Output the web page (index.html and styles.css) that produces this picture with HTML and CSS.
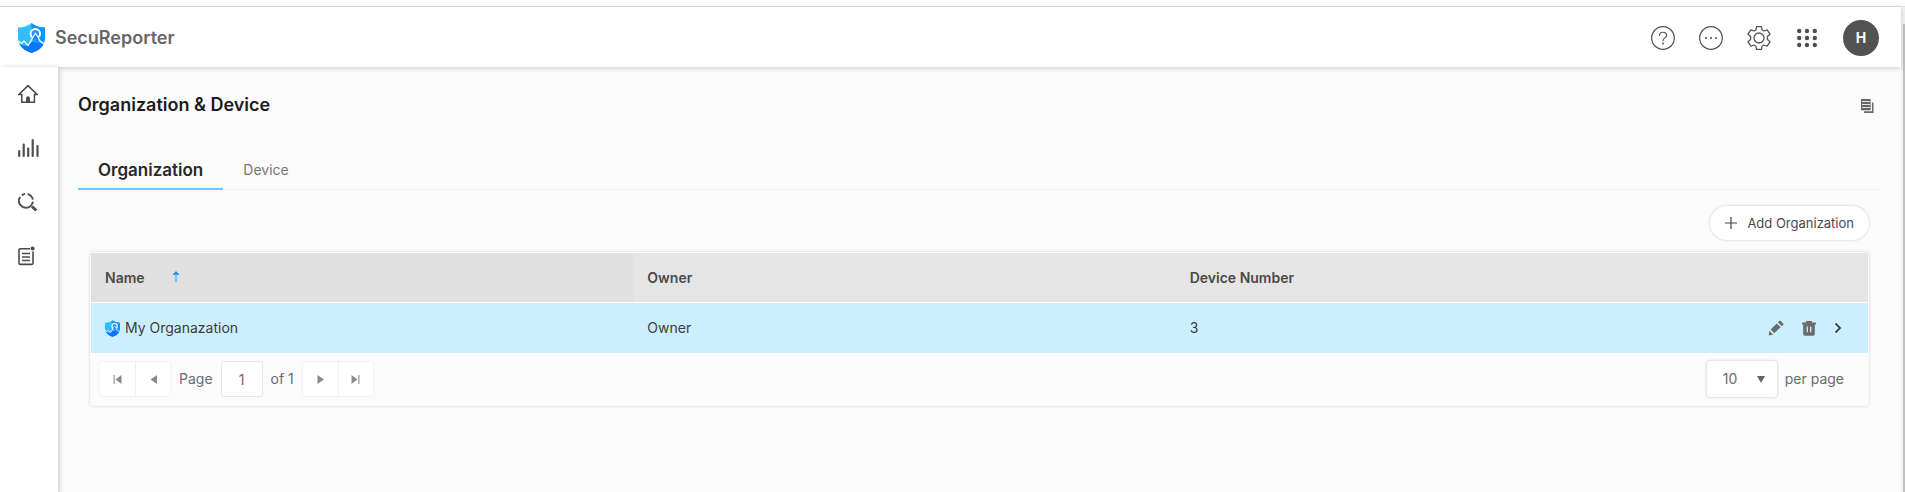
FILE: index.html
```html
<!DOCTYPE html>
<html lang="en">
<head>
<meta charset="utf-8">
<meta name="viewport" content="width=device-width, initial-scale=1">
<title>SecuReporter</title>
<link rel="stylesheet" href="styles.css">
</head>
<body>
<svg class="sprite" aria-hidden="true">
  <linearGradient id="shield-left" x1="0" y1="0" x2="0" y2="1"><stop offset="0" stop-color="#2fc3ff"/><stop offset="1" stop-color="#38b2ff"/></linearGradient>
  <symbol id="shield" viewBox="0 0 27 30">
    <path d="M0 4.500C5 4.600 9.500 3.200 13.500 0C17.500 3.200 22 4.600 27 4.500V16C27 23 20 28 13.500 30C7 28 0 23 0 16Z" fill="url(#shield-left)"/>
    <path d="M13.500 0C17.500 3.200 22 4.600 27 4.500V16L24 22L13.500 16Z" fill="#0a96ff"/>
    <path d="M1.500 21.500L8 23L15 18.500L25.800 21C23.500 25.500 18.500 28.500 13.500 30C8.500 28.500 4 25.500 1.500 21.500Z" fill="#0877ff"/>
    <circle cx="17.300" cy="10.800" r="4.700" fill="#2196ff" stroke="#fff" stroke-width="2"/>
    <path d="M0 18L3.500 20.500L6 18L10 22.500L17.500 10.500L22 18L26.500 21.500" fill="none" stroke="#fff" stroke-width="1.300"/>
    <path d="M14.500 16.500L17.500 11.500L20.500 16.500Z" fill="#0b7dff"/>
  </symbol>
</svg>
<div class="page">
  <div class="app">
    <header class="topbar">
      <a class="brand" href="#"><svg class="brand-logo" aria-hidden="true"><use href="#shield"/></svg>SecuReporter</a>
      <div class="top-actions">
        <button class="icon-btn" aria-label="Help"><svg width="24" height="24" viewBox="0 0 24 24" fill="none" stroke="#555" stroke-width="1.200"><circle cx="12" cy="12" r="11.300"/><path d="M8.500 9.500C8.500 5.200 15.600 5.200 15.600 9.400C15.600 12 12 11.800 12 14.800" stroke-linecap="round"/><circle cx="12" cy="17.600" r="1" fill="#555" stroke="none"/></svg></button>
        <button class="icon-btn" aria-label="More"><svg width="24" height="24" viewBox="0 0 24 24" fill="none" stroke="#555" stroke-width="1.200"><circle cx="12" cy="12" r="11.300"/><g fill="#555" stroke="none"><circle cx="7" cy="12" r="1.100"/><circle cx="12" cy="12" r="1.100"/><circle cx="17" cy="12" r="1.100"/></g></svg></button>
        <button class="icon-btn" aria-label="Settings"><svg width="24" height="24" viewBox="0 0 24 24" fill="none" stroke="#555" stroke-width="1.300" stroke-linejoin="round"><circle cx="12" cy="12" r="5"/><path d="M9.500 .7h5l.6 3.300 1.800 1 3.200-1.200 2.900 4.400-2.600 2.300v3l2.600 2.300-2.900 4.400-3.200-1.200-1.800 1-.6 3.300h-5l-.6-3.300-1.800-1-3.200 1.200L1 15.800l2.600-2.300v-3L1 8.200l2.900-4.400L7.100 5l1.800-1z"/></svg></button>
        <button class="icon-btn apps" aria-label="Apps"><svg width="20" height="20" viewBox="0 0 20 20" fill="#4f4f4f"><circle cx="2.200" cy="3" r="2.200"/><circle cx="10" cy="3" r="2.200"/><circle cx="17.800" cy="3" r="2.200"/><circle cx="2.200" cy="10" r="2.200"/><circle cx="10" cy="10" r="2.200"/><circle cx="17.800" cy="10" r="2.200"/><circle cx="2.200" cy="17" r="2.200"/><circle cx="10" cy="17" r="2.200"/><circle cx="17.800" cy="17" r="2.200"/></svg></button>
        <button class="avatar" aria-label="Account">H</button>
      </div>
    </header>
    <div class="body">
      <nav class="sidebar" aria-label="Main">
        <a href="#" aria-label="Home"><svg width="20" height="20" viewBox="0 0 20 20" fill="none" stroke="#4a4a4a" stroke-width="1.500"><path d="M3.800 10.500H.9L10 1.600l9.100 8.900H16.400V18.300H3.800z"/><path d="M8.100 18.500V14q0-1.700 1.900-1.700t1.900 1.700v4.500z" fill="#4a4a4a" stroke="none"/></svg></a>
        <a href="#" aria-label="Analysis"><svg width="21" height="20" viewBox="0 0 21 20" stroke="#4f4f4f" stroke-width="2.200" stroke-linecap="round"><path d="M1.200 13v5M5.700 6.500V18M10.200 10.500V18M14.700 2.200V18M19.500 8V18"/></svg></a>
        <a href="#" aria-label="Search"><svg width="20" height="20" viewBox="0 0 20 20" fill="none" stroke="#4f4f4f" stroke-width="1.900"><circle cx="8" cy="8.800" r="7" stroke-dasharray="4 2 25 2.500 3.500 2.500 4.480" transform="rotate(-42 8 8.800)"/><path d="M14 14.500l4.300 4" stroke-width="3"/></svg></a>
        <a href="#" aria-label="Reports"><svg width="17" height="20" viewBox="0 0 17 20" fill="none" stroke="#4a4a4a" stroke-width="1.600"><path d="M12 2.800H2.300Q1 2.800 1 4V17.200Q1 18.400 2.300 18.400H13.700Q15 18.400 15 17.200V5.500"/><path d="M4 7.500h8M4 11h8M4 14.500h8" stroke-width="1.300"/><circle cx="14.600" cy="2.600" r="2" fill="#4a4a4a" stroke="none"/></svg></a>
      </nav>
      <main class="content">
        <div class="title-row">
          <h1>Organization &amp; Device</h1>
          <button class="icon-btn copy" aria-label="Copy"><svg width="13" height="14" viewBox="0 0 13 14"><path d="M3 12.300V14H12.500V3.500H11V12.300z" fill="#6b6b6b"/><path d="M0 0h9.600v11.300H0z" fill="#666"/><path d="M1 2.500h8M1 5.500h8M1 8.500h8" stroke="#e5e5e5" stroke-width="1"/></svg></button>
        </div>
        <div class="tabs" role="tablist">
          <button class="tab active" role="tab" aria-selected="true">Organization</button>
          <button class="tab" role="tab" aria-selected="false">Device</button>
        </div>
        <div class="toolbar">
          <button class="add"><svg width="12" height="12" viewBox="0 0 12 12" stroke="#444" stroke-width="1.200" aria-hidden="true"><path d="M6 0v12M0 6h12"/></svg>Add Organization</button>
        </div>
        <section class="card">
          <table>
            <thead>
              <tr><th class="sorted" aria-sort="ascending">Name<svg class="sort" width="8" height="12" viewBox="0 0 8 12" aria-hidden="true"><path d="M4 0l3.500 4h-7z" fill="#1192ff"/><path d="M4 3v8" stroke="#5bb5ff" stroke-width="1.500"/></svg></th><th>Owner</th><th>Device Number</th><th class="actions-col"></th></tr>
            </thead>
            <tbody>
              <tr>
                <td><span class="org"><svg class="org-logo" aria-hidden="true"><use href="#shield"/></svg>My Organazation</span></td>
                <td>Owner</td>
                <td>3</td>
                <td>
                  <div class="row-actions">
                    <button class="icon-btn" aria-label="Edit"><svg width="16" height="16" viewBox="0 0 16 16" fill="#6c6c6c"><path d="M8.800 3.400l3.800 3.800-6.400 6.100-3.600-3.800z"/><path d="M10 2.400q1.200-2 2.300-1.800L15.600 4q.1 1-1.800 2.300z"/><path d="M1.200 10.800l4 3.900L.8 15.600z"/></svg></button>
                    <button class="icon-btn" aria-label="Delete"><svg width="14" height="15" viewBox="0 0 14 15"><path d="M4 0h6v1.500h4v2h-1.200V13q0 1.800-1.800 1.800H3Q1.200 14.800 1.200 13V3.500H0v-2h4z" fill="#6c6c6c"/><path d="M5.300 5.500v5.800M8.700 5.500v5.800" stroke="#ccefff" stroke-width="1.300"/></svg></button>
                    <button class="icon-btn" aria-label="Open"><svg width="8" height="12" viewBox="0 0 8 12" fill="none" stroke="#2a2a2a" stroke-width="1.700"><path d="M1.500 1.500L6 6l-4.500 4.500"/></svg></button>
                  </div>
                </td>
              </tr>
            </tbody>
          </table>
          <div class="pager">
            <div class="pager-group">
              <div class="nav-pair">
                <button aria-label="First page"><svg width="9" height="9" viewBox="0 0 9 9"><path d="M1.200 0v9" stroke="#b5b5b5" stroke-width="1.800"/><path d="M8.500 0v9L2.500 4.500z" fill="#8a8a8a"/></svg></button><button aria-label="Previous page"><svg width="9" height="9" viewBox="0 0 9 9"><path d="M8 0v9L1.500 4.500z" fill="#8a8a8a"/></svg></button>
              </div>
              <label for="page">Page</label>
              <input id="page" type="text" value="1">
              <span class="total">of 1</span>
              <div class="nav-pair">
                <button aria-label="Next page"><svg width="9" height="9" viewBox="0 0 9 9"><path d="M1.500 0v9L8 4.500z" fill="#8a8a8a"/></svg></button><button aria-label="Last page"><svg width="9" height="9" viewBox="0 0 9 9"><path d="M7.800 0v9" stroke="#b5b5b5" stroke-width="1.800"/><path d="M.5 0v9l6-4.500z" fill="#8a8a8a"/></svg></button>
              </div>
            </div>
            <div class="pager-group size-group">
              <div class="select-box">
                <select id="size"><option>10</option><option>20</option><option>50</option></select>
                <svg width="8" height="7" viewBox="0 0 8 7" aria-hidden="true"><path d="M0 0h8L4 7z" fill="#666"/></svg>
              </div>
              <label for="size">per page</label>
            </div>
          </div>
        </section>
      </main>
    </div>
  </div>
  <div class="scroll-track"><div class="scroll-thumb"></div></div>
</div>
</body>
</html>
```
FILE: styles.css
```css
* { box-sizing: border-box; }
body {
  margin: 0;
  font-family: Inter, "Open Sans", sans-serif;
  font-size: 14px;
  line-height: 20px;
  color: #4a4a4a;
  background: #fff;
}
button, input, select { font: inherit; color: inherit; margin: 0; }
button { cursor: pointer; }
a { color: inherit; text-decoration: none; }
svg { display: block; flex: none; }
.sprite { position: absolute; width: 0; height: 0; }

.page { display: flex; min-height: 100vh; padding-top: 6px; }
.app {
  flex: 1;
  min-width: 0;
  display: flex;
  flex-direction: column;
  border-top: 1px solid #dedede;
}
.scroll-track {
  flex: none;
  width: 4px;
  padding: 17px 0 0 2px;
  background: #f1f1f1;
  border-top: 1px solid #dedede;
}
.scroll-thumb { height: 100%; background: #c1c1c1; }

.topbar {
  position: relative;
  z-index: 2;
  display: flex;
  align-items: center;
  justify-content: space-between;
  height: 60px;
  padding: 1px 22px 0 18px;
  background: #fff;
  box-shadow: 0 1px 5px rgba(0, 0, 0, .2);
}
.brand {
  display: flex;
  align-items: center;
  gap: 10px;
  font-size: 18px;
  font-weight: 600;
  color: #666;
}
.brand-logo { width: 27px; height: 30px; }
.top-actions { display: flex; align-items: center; gap: 24px; }
.icon-btn { padding: 0; border: 0; background: none; }
.apps { margin: 0 2px; }
.avatar {
  width: 36px;
  height: 36px;
  padding: 0;
  border: 0;
  border-radius: 50%;
  background: #525252;
  color: #fff;
  font-weight: 700;
}

.body { flex: 1; display: flex; }
.sidebar {
  position: relative;
  z-index: 2;
  flex: none;
  width: 58px;
  display: flex;
  flex-direction: column;
  gap: 34px;
  padding: 17px 0 0 18px;
  background: #fff;
  box-shadow: 1px 1px 5px rgba(0, 0, 0, .22);
}
.content { flex: 1; min-width: 0; padding: 26px 20px 0; background: #fbfbfb; }
.title-row {
  display: flex;
  align-items: center;
  justify-content: space-between;
  height: 24px;
  padding-right: 7px;
}
h1 { margin: 0; font-size: 18px; line-height: 24px; font-weight: 600; color: #1c1c1c; }
.copy { margin-top: 2px; }

.tabs { display: flex; margin-top: 35px; border-bottom: 1px solid #f0f0f0; }
.tab {
  height: 38px;
  margin-bottom: -1px;
  padding: 0 20px;
  border: 0;
  border-bottom: 2px solid transparent;
  background: none;
  color: #777;
}
.tab.active {
  border-color: #60cdff;
  font-size: 17px;
  font-weight: 600;
  color: #292929;
}

.toolbar { display: flex; justify-content: flex-end; padding: 16px 12px 12px; }
.add {
  display: flex;
  align-items: center;
  gap: 10px;
  height: 34px;
  padding: 0 15px;
  border: 0;
  border-radius: 17px;
  background: #fff;
  box-shadow: 0 0 3px rgba(0, 0, 0, .2);
  font-size: 13px;
}

.card {
  margin: 0 12px;
  padding: 1px;
  border-radius: 3px;
  background: #fbfbfb;
  box-shadow: 0 0 3px rgba(0, 0, 0, .18);
}
table { width: 100%; table-layout: fixed; border-collapse: separate; border-spacing: 0; }
th, td { padding: 0 14px; text-align: left; }
th {
  height: 50px;
  border-bottom: 1px solid #fbfbfb;
  background: #e5e5e5;
  font-weight: 600;
}
.sorted { background: #e0e0e0; }
.actions-col { width: 150px; }
.sort { display: inline-block; margin-left: 27px; }
td { height: 50px; background: #ccefff; color: #3c3c3c; }
.org { display: flex; align-items: center; gap: 5px; }
.org-logo { width: 15px; height: 17px; }
.row-actions { display: flex; align-items: center; justify-content: flex-end; gap: 18px; padding-right: 12px; }

.pager {
  display: flex;
  align-items: center;
  justify-content: space-between;
  height: 52px;
  padding: 0 24px 0 8px;
  color: #6b6b6b;
}
.pager-group { display: flex; align-items: center; gap: 8px; }
.nav-pair {
  display: flex;
  border: 1px solid #f2f2f2;
  border-radius: 3px;
  background: #fff;
}
.nav-pair button {
  display: flex;
  align-items: center;
  justify-content: center;
  width: 35px;
  height: 34px;
  padding: 0;
  border: 0;
  background: none;
}
.nav-pair button + button { border-left: 1px solid #f2f2f2; }
.pager input {
  width: 42px;
  height: 36px;
  padding: 0;
  border: 1px solid #e6e6e6;
  border-radius: 3px;
  background: #fff;
  text-align: center;
}
.select-box { position: relative; }
.select-box svg { position: absolute; top: 15px; right: 12px; pointer-events: none; }
.select-box select {
  display: block;
  width: 70px;
  height: 36px;
  padding: 0 16px;
  border: 0;
  border-radius: 3px;
  background: #fff;
  box-shadow: 0 0 3px rgba(0, 0, 0, .24);
  appearance: none;
}
```
